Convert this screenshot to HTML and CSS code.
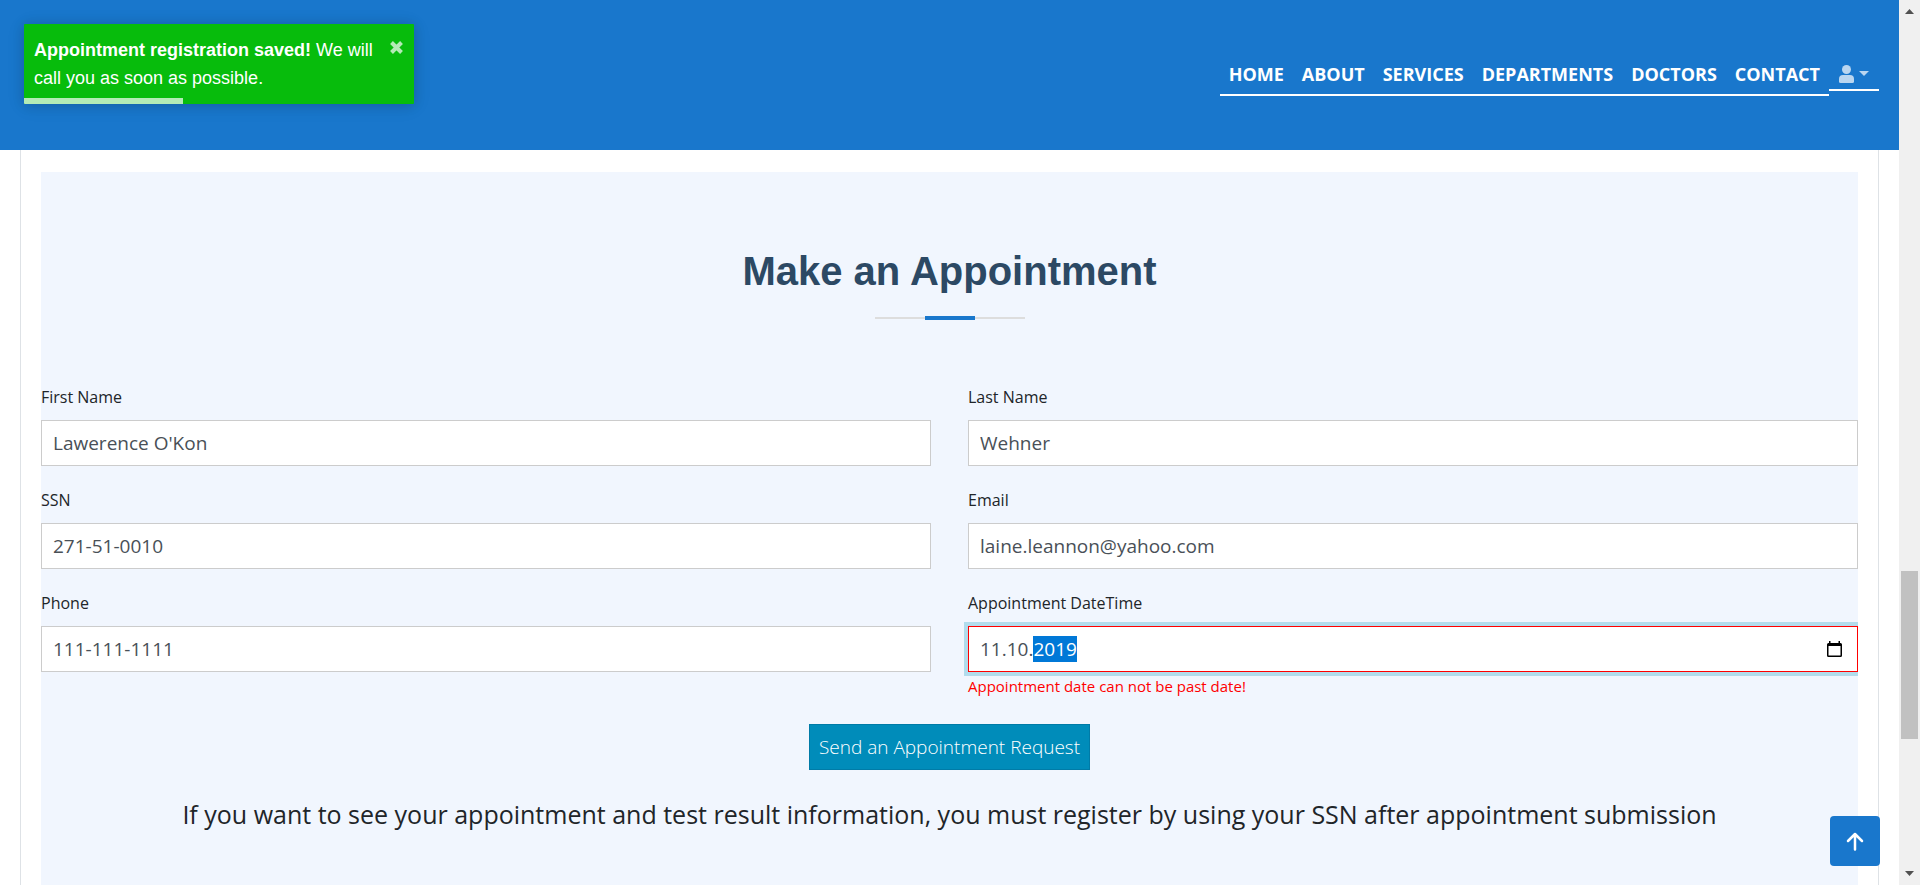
FILE: index.html
```html
<!DOCTYPE html>
<html lang="en">
<head>
<meta charset="utf-8">
<title>Make an Appointment</title>
<link rel="stylesheet" href="styles.css">
</head>
<body>
<div class="page">
  <header class="header">
    <nav class="nav">
      <a class="nav-link" href="#home">HOME</a>
      <a class="nav-link" href="#about">ABOUT</a>
      <a class="nav-link" href="#services">SERVICES</a>
      <a class="nav-link" href="#departments">DEPARTMENTS</a>
      <a class="nav-link" href="#doctors">DOCTORS</a>
      <a class="nav-link" href="#contact">CONTACT</a>
    </nav>
    <button class="account" type="button" aria-label="Account">
      <svg width="15" height="18" viewBox="0 0 15 18"><circle cx="7.5" cy="4.5" r="4.5"/><path d="M4 10h7a4 4 0 0 1 4 4v2.500a1.500 1.500 0 0 1-1.500 1.500h-12A1.500 1.500 0 0 1 0 16.500V14a4 4 0 0 1 4-4z"/></svg>
      <svg width="10" height="5" viewBox="0 0 10 5"><path d="M0 0h10L5 5z"/></svg>
    </button>
  </header>
  <main class="content">
    <section class="appointment">
      <h2 class="title">Make an Appointment</h2>
      <form class="form">
        <div class="fields">
          <div class="field"><label for="first">First Name</label><input class="control" id="first" type="text" value="Lawerence O'Kon"></div>
          <div class="field"><label for="last">Last Name</label><input class="control" id="last" type="text" value="Wehner"></div>
          <div class="field"><label for="ssn">SSN</label><input class="control" id="ssn" type="text" value="271-51-0010"></div>
          <div class="field"><label for="email">Email</label><input class="control" id="email" type="email" value="laine.leannon@yahoo.com"></div>
          <div class="field"><label for="phone">Phone</label><input class="control" id="phone" type="tel" value="111-111-1111"></div>
          <div class="field">
            <label for="date">Appointment DateTime</label>
            <div class="control date">
              <input class="date-input" id="date" type="text" value="11.10.2019" aria-invalid="true" aria-describedby="date-error">
              <button class="picker" type="button" aria-label="Open calendar"><svg width="15" height="17" viewBox="0 0 15 17"><path d="M2 0h1.500v2h8V0H13v2h.5A1.500 1.500 0 0 1 15 3.500v11a1.500 1.500 0 0 1-1.500 1.500h-12A1.500 1.500 0 0 1 0 14.500v-11A1.500 1.500 0 0 1 1.500 2H2zM1.500 5v9.500h12V5z"/></svg></button>
            </div>
            <p class="error" id="date-error">Appointment date can not be past date!</p>
          </div>
        </div>
        <button class="submit" type="button">Send an Appointment Request</button>
      </form>
      <p class="note">If you want to see your appointment and test result information, you must register by using your SSN after appointment submission</p>
    </section>
  </main>
</div>
<div class="scrollbar" aria-hidden="true">
  <svg width="9" height="5" viewBox="0 0 9 5"><path d="M0 5h9L4.500 0z"/></svg>
  <div class="track"><div class="thumb"></div></div>
  <svg width="9" height="5" viewBox="0 0 9 5"><path d="M0 0h9L4.500 5z"/></svg>
</div>
<div class="toast" role="alert">
  <p class="toast-text"><strong>Appointment registration saved!</strong> We will call you as soon as possible.</p>
  <button class="toast-close" type="button" aria-label="Close"><svg width="15" height="15" viewBox="0 0 15 15"><path d="M2.500 2.500l10 10M12.500 2.500l-10 10"/></svg></button>
  <div class="progress"></div>
</div>
<a class="to-top" href="#home" aria-label="Back to top"><svg width="18" height="19" viewBox="0 0 18 19"><path d="M9 17.500V2M2 9l7-7 7 7"/></svg></a>
<script src="main.js"></script>
</body>
</html>
```
FILE: styles.css
```css
* { box-sizing: border-box; }
body {
  margin: 0;
  height: 100vh;
  display: flex;
  overflow: hidden;
  background: #fff;
  color: #212529;
  font-family: "Open Sans", sans-serif;
}
h2, p { margin: 0; }
button { font: inherit; cursor: pointer; }
svg { display: block; }

.page { flex: 1; min-width: 0; display: flex; flex-direction: column; }
.header {
  display: flex;
  justify-content: flex-end;
  align-items: flex-start;
  height: 150px;
  flex: none;
  padding: 54px 20px 0;
  background: #1977cc;
}
.nav { display: flex; border-bottom: 2px solid #fff; }
.nav-link {
  padding: 8px 9px;
  color: #fff;
  font-size: 18px;
  font-weight: 700;
  line-height: 24px;
  text-decoration: none;
}
.account {
  display: flex;
  align-items: center;
  gap: 5px;
  width: 50px;
  height: 37px;
  padding: 4px 10px 0;
  border: 0;
  border-bottom: 2px solid #fff;
  background: none;
  fill: #bad6f0;
}

.content {
  flex: 1;
  min-height: 0;
  margin: 0 20px;
  padding: 22px 20px 0;
  border: solid #dee2e6;
  border-width: 0 1px;
}
.appointment { height: 100%; padding-top: 75px; overflow: hidden; background: #f1f6fe; }
.title {
  padding-bottom: 25px;
  color: #2c4964;
  font: 700 40px/48px "Liberation Sans", Arial, sans-serif;
  text-align: center;
  background:
    linear-gradient(#1977cc, #1977cc) center bottom / 50px 4px no-repeat,
    linear-gradient(#ddd, #ddd) center bottom 1px / 150px 2px no-repeat;
}
.form { display: flex; flex-direction: column; align-items: center; padding-top: 64px; }
.fields {
  width: 100%;
  display: grid;
  grid-template-columns: 1fr 1fr;
  gap: 21px 37px;
}
.field { display: flex; flex-direction: column; }
label { margin-bottom: 10px; font-size: 16px; line-height: 26px; }
.control {
  width: 100%;
  height: 46px;
  padding: 0 11px;
  border: 1px solid #ccc;
  background: #fff;
  color: #495057;
  font: 400 19px/28px "Open Sans", sans-serif;
}
.date {
  display: flex;
  align-items: center;
  border-color: #f00;
  box-shadow: 0 0 0 4px #b2dcec;
}
.date-input {
  flex: 1;
  min-width: 0;
  height: 26px;
  padding: 0;
  border: 0;
  outline: 0;
  background: none;
  color: inherit;
  font: inherit;
}
.date-input::selection { background: #0078d7; color: #fff; }
.picker { padding: 0 4px; border: 0; background: none; fill: #000; }
.error { padding-top: 1px; color: #f00; font-size: 15px; line-height: 26px; }
.submit {
  height: 46px;
  margin-top: 25px;
  padding: 0 9px;
  border: 1px solid #007ba7;
  background: #008cba;
  color: #fff;
  font-size: 19px;
  font-weight: 300;
}
.note { padding-top: 24px; font-size: 25px; line-height: 40px; text-align: center; }

.scrollbar {
  width: 21px;
  display: flex;
  flex-direction: column;
  align-items: center;
  padding: 9px 0;
  background: #f0f0f0;
  fill: #505050;
}
.track { flex: 1; width: 17px; display: flex; flex-direction: column; }
.track::before { content: ""; flex: 557; }
.track::after { content: ""; flex: 132; }
.thumb { flex: 168; background: #c1c1c1; }

.toast {
  position: absolute;
  top: 24px;
  left: 24px;
  display: flex;
  width: 390px;
  padding: 12px 10px;
  border-radius: 1px;
  overflow: hidden;
  background: #07bc0c;
  color: #fff;
  font-family: "Liberation Sans", Arial, sans-serif;
  box-shadow: 0 1px 12px rgba(0, 0, 0, .15), 0 2px 20px rgba(0, 0, 0, .08);
}
.toast-text { flex: 1; font-size: 18px; line-height: 28px; }
.toast-close {
  align-self: flex-start;
  padding: 4px 0 0;
  border: 0;
  background: none;
  fill: none;
  stroke: #b4eab6;
  stroke-width: 4;
}
.progress {
  position: absolute;
  left: 0;
  bottom: 0;
  width: 159px;
  height: 6px;
  background: #b4ebb6;
}
.to-top {
  position: absolute;
  right: 40px;
  bottom: 19px;
  display: grid;
  place-items: center;
  width: 50px;
  height: 50px;
  border-radius: 4px;
  background: #1977cc;
  fill: none;
  stroke: #fff;
  stroke-width: 2.5;
  stroke-linecap: round;
  stroke-linejoin: round;
}
```
FILE: main.js
```js
const date = document.getElementById("date");
date.focus();
date.setSelectionRange(6, 10);
```
